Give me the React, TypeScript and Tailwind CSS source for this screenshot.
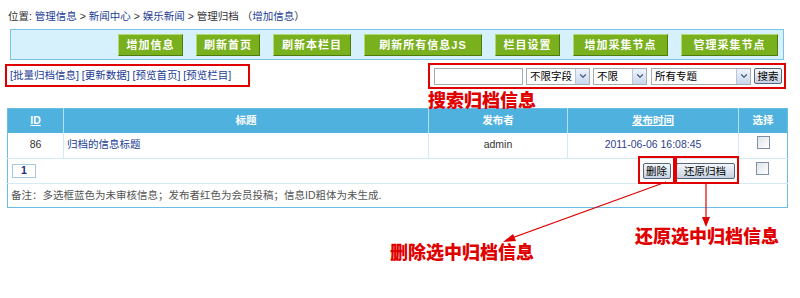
import { ChevronDown } from "lucide-react";

const toolbarButtons = [
  { label: "增加信息", w: "w-[65px]" },
  { label: "刷新首页", w: "w-[64px]" },
  { label: "刷新本栏目", w: "w-[78px]" },
  { label: "刷新所有信息JS", w: "w-[118px]" },
  { label: "栏目设置", w: "w-[65px]" },
  { label: "增加采集节点", w: "w-[95px]" },
  { label: "管理采集节点", w: "w-[97px]" },
];

const Select = ({ label, w }: { label: string; w: string }) => (
  <div className={`${w} h-[17px] flex items-center justify-between border border-[#a5acb2] bg-white pl-[3px]`}>
    <span className="text-[10.5px] leading-none text-black">{label}</span>
    <span className="w-[14px] h-[15px] flex items-center justify-center bg-gradient-to-b from-[#eef3fb] to-[#c9d8ee] border-l border-[#b7c6dd]">
      <ChevronDown size={10} strokeWidth={3} className="text-[#4d6185]" />
    </span>
  </div>
);

const Checkbox = () => (
  <span className="inline-block w-[13px] h-[13px] border border-[#7f8fa6] bg-gradient-to-br from-[#dfe3e8] to-white" />
);

const GrayButton = ({ label, w }: { label: string; w: string }) => (
  <button className={`${w} h-[16px] flex items-center justify-center border border-[#55657c] rounded-[2px] bg-gradient-to-b from-[#f4f7fb] to-[#c5d2e2] text-[10.5px] leading-none text-black`}>
    {label}
  </button>
);

export default function App() {
  return (
    <div className="relative w-[800px] h-[298px] bg-white overflow-hidden font-['Liberation_Sans','Noto_Sans_CJK_SC',sans-serif] text-[10.5px] text-[#333]">
      {/* breadcrumb */}
      <div className="pt-[8px] pl-[8px] h-[24px] leading-[16px]">
        <span>位置: </span>
        <a className="text-[#1b3d96]">管理信息</a>
        <span> &gt; </span>
        <a className="text-[#1b3d96]">新闻中心</a>
        <span> &gt; </span>
        <a className="text-[#1b3d96]">娱乐新闻</a>
        <span> &gt; </span>
        <span>管理归档</span>
        <span> （<a className="text-[#1b3d96]">增加信息</a>）</span>
      </div>

      {/* toolbar */}
      <div className="ml-[10px] mt-[5px] w-[774px] h-[31px] flex items-start justify-end gap-[13px] pt-[4px] pr-[5px] bg-[#d6f1fc] border border-[#7cc3e3]">
        {toolbarButtons.map((b) => (
          <button
            key={b.label}
            className={`${b.w} h-[22px] flex items-center justify-center bg-[#79b01d] border border-t-[#b3d771] border-l-[#b3d771] border-r-[#4f7a0c] border-b-[#4f7a0c] text-white font-bold text-[11px] tracking-[1px]`}
          >
            {b.label}
          </button>
        ))}
      </div>

      {/* links + search */}
      <div className="mt-[3px] flex justify-between items-start pl-[5px] pr-[14px]">
        <div className="mt-[1px] h-[23px] w-[245px] border-2 border-[#e00000] flex items-center pl-[3px] text-[#1b3d96] text-[10.5px]">
          [批量归档信息] [更新数据] [预览首页] [预览栏目]
        </div>
        <div className="flex flex-col w-[358px]">
          <div className="h-[26px] border-2 border-[#e00000] flex items-center pl-[4px] pr-[2px]">
            <input className="w-[89px] h-[17px] border border-[#a5acb2] bg-white" />
            <div className="ml-[3px]">
              <Select label="不限字段" w="w-[64px]" />
            </div>
            <div className="ml-[3px]">
              <Select label="不限" w="w-[54px]" />
            </div>
            <div className="ml-[4px]">
              <Select label="所有专题" w="w-[100px]" />
            </div>
            <div className="ml-[3px]">
              <GrayButton label="搜索" w="w-[28px]" />
            </div>
          </div>
          <div className="h-[18px] leading-[18px] text-[18px] font-black text-[#e00000] font-['Noto_Sans_CJK_SC',sans-serif] mt-[1px]">
            搜索归档信息
          </div>
        </div>
      </div>

      {/* table */}
      <table className="ml-[7px] w-[780px] table-fixed border-collapse border border-[#6cbde4] text-[10.5px]">
        <colgroup>
          <col className="w-[56px]" />
          <col className="w-[365px]" />
          <col className="w-[139px]" />
          <col className="w-[171px]" />
          <col className="w-[49px]" />
        </colgroup>
        <thead>
          <tr className="h-[24px] bg-[#4fb1de] text-white font-bold">
            <th className="border-r border-[#b5e0f3] underline">ID</th>
            <th className="border-r border-[#b5e0f3]">标题</th>
            <th className="border-r border-[#b5e0f3]">发布者</th>
            <th className="border-r border-[#b5e0f3] underline">发布时间</th>
            <th>选择</th>
          </tr>
        </thead>
        <tbody>
          <tr className="h-[26px] border-b border-[#d3e9f4]">
            <td className="text-center border-r border-[#d3e9f4]">86</td>
            <td className="pl-[3px] text-[#1b3d96] border-r border-[#d3e9f4]">归档的信息标题</td>
            <td className="text-center border-r border-[#d3e9f4]">admin</td>
            <td className="text-center text-[#2f3f8f] border-r border-[#d3e9f4]">2011-06-06 16:08:45</td>
            <td className="text-center">
              <Checkbox />
            </td>
          </tr>
          <tr className="h-[25px] border-b border-[#d3e9f4]">
            <td colSpan={4} className="px-[4px]">
              <div className="flex items-center justify-between">
                <span className="w-[24px] h-[14px] flex items-center justify-center border border-[#a9c8dd] bg-white font-bold text-[#1a2f7a]">
                  1
                </span>
                <div className="flex items-center gap-[5px]">
                  <div className="relative">
                    <GrayButton label="删除" w="w-[28px]" />
                    <span className="absolute -left-[5px] -right-[4px] -top-[7px] -bottom-[5px] border-2 border-[#e00000]" />
                  </div>
                  <div className="relative">
                    <GrayButton label="还原归档" w="w-[59px]" />
                    <span className="absolute -left-[1px] -right-[4px] -top-[7px] -bottom-[5px] border-2 border-[#e00000]" />
                  </div>
                </div>
              </div>
            </td>
            <td className="text-center">
              <Checkbox />
            </td>
          </tr>
          <tr className="h-[24px]">
            <td colSpan={5} className="pl-[3px] text-[#555]">
              备注：多选框蓝色为未审核信息；发布者红色为会员投稿；信息ID粗体为未生成.
            </td>
          </tr>
        </tbody>
      </table>

      {/* annotations */}
      <svg className="absolute inset-0 pointer-events-none" width="800" height="298">
        <line x1="666" y1="182" x2="506" y2="240" stroke="#e00000" strokeWidth="1.2" />
        <polygon points="503,242 513,234 516,241" fill="#e00000" />
        <line x1="706" y1="182" x2="706" y2="222" stroke="#e00000" strokeWidth="1.2" />
        <polygon points="706,227 702,217 710,217" fill="#e00000" />
      </svg>
      <div className="absolute left-[390px] top-[240px] text-[18px] leading-[22px] font-black text-[#e00000] font-['Noto_Sans_CJK_SC',sans-serif]">
        删除选中归档信息
      </div>
      <div className="absolute left-[635px] top-[224px] text-[18px] leading-[22px] font-black text-[#e00000] font-['Noto_Sans_CJK_SC',sans-serif]">
        还原选中归档信息
      </div>
    </div>
  );
}
